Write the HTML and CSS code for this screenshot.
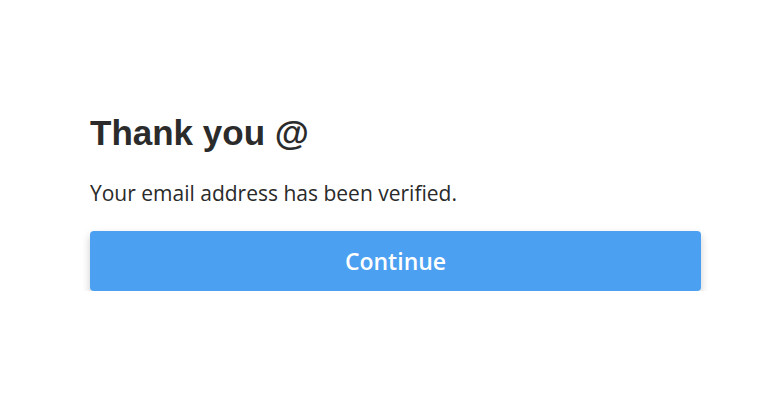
FILE: index.html
```html
<!DOCTYPE html>
<html lang="en">
<head>
<meta charset="utf-8">
<link rel="stylesheet" href="styles.css">
</head>
<body>
<main class="card">
  <h1 class="title">Thank you @</h1>
  <p class="message">Your email address has been verified.</p>
  <button class="continue" type="button">Continue</button>
</main>
</body>
</html>
```
FILE: styles.css
```css
html, body {
  margin: 0;
  padding: 0;
  background: #ffffff;
}
.card {
  width: 611px;
  padding: 111px 0 0 90px;
  display: flex;
  flex-direction: column;
}
.title {
  margin: 0;
  font-family: "Liberation Sans", Arial, sans-serif;
  font-weight: 700;
  font-size: 35px;
  line-height: 44px;
  color: #2b2b2b;
}
.message {
  margin: 24px 0 0 0;
  font-family: "Open Sans", "Noto Sans", sans-serif;
  font-size: 21px;
  line-height: 28px;
  color: #2a2a2a;
}
.continue {
  margin-top: 24px;
  height: 60px;
  width: 611px;
  border: none;
  border-radius: 4px;
  background: #4ca0f1;
  color: #ffffff;
  font-family: "Open Sans", "Noto Sans", sans-serif;
  font-weight: 600;
  font-size: 23px;
  box-shadow: 0 4px 8px rgba(0, 0, 0, 0.2);
  cursor: pointer;
}
```
